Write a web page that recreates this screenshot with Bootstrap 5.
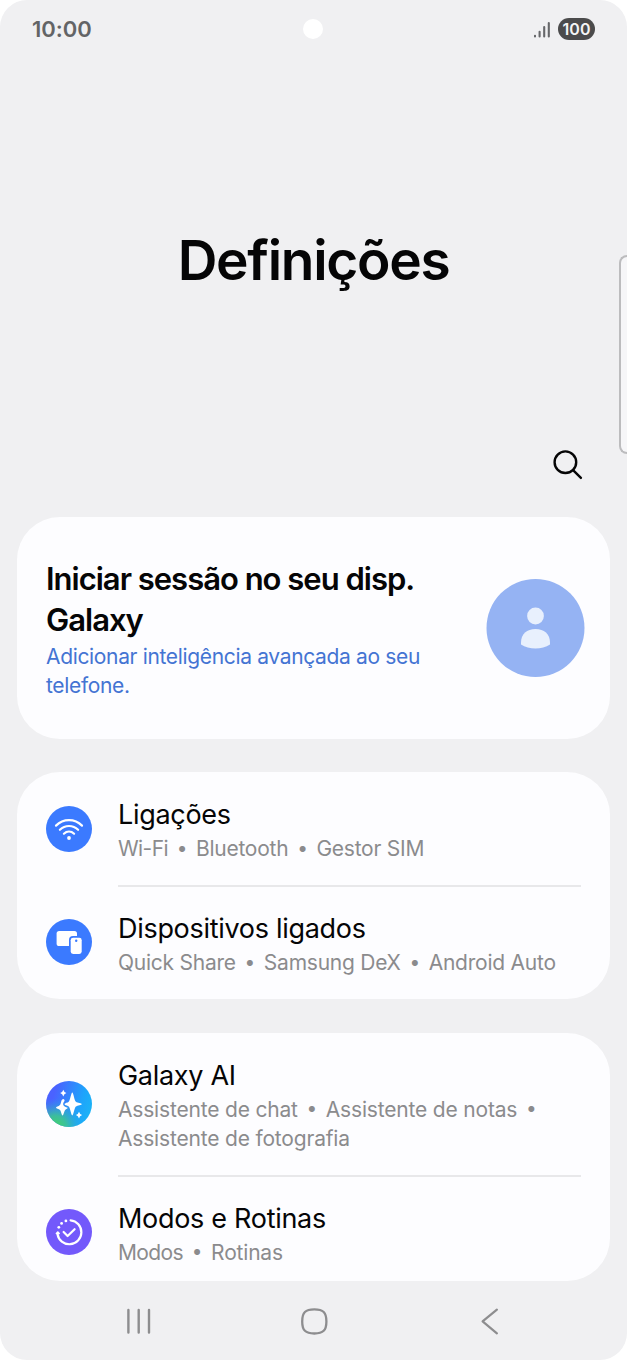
<!DOCTYPE html>
<html lang="pt">
<head>
<meta charset="utf-8">
<meta name="viewport" content="width=device-width, initial-scale=1">
<title>Definições</title>
<link rel="stylesheet" href="https://cdn.jsdelivr.net/npm/bootstrap@5.3.0/dist/css/bootstrap.min.css">
<style>
  body { background: #fff; font-family: Inter, "Liberation Sans", sans-serif; color: #050506; }
  svg { display: block; flex: none; }
  .screen { height: 1360px; background: #f0f0f2; border-radius: 27px; }
  .status-bar { height: 58px; padding: 0 32px 0 32px; color: #636466; }
  .clock { font-size: 22px; font-weight: 600; letter-spacing: -.05px; line-height: 58px; }
  .camera { width: 20px; height: 20px; top: 19px; left: 303px; background: #fff; }
  .battery { width: 37px; height: 22px; background: #4b4b4c; color: #f4f4f5; font-size: 16px; font-weight: 600; line-height: 22px; }
  .hero { height: 374px; padding-top: 162px; }
  .hero h1 { font-size: 55px; font-weight: 560; line-height: 80px; letter-spacing: -1.3px; }
  .edge-panel { top: 254.5px; right: 0; width: 8px; height: 199px; background: #f6f6f8; border: 2px solid #bcbcbe; border-right: 0; border-radius: 8px 0 0 8px; }
  .search-row { height: 85px; padding: 16px 44px 0 0; }
  .panel { margin: 0 17px; background: #fdfdff; border-radius: 43px; }
  .account { height: 222px; padding: 2px 25px 0 29px; margin-bottom: 33px; }
  .account svg { margin-bottom: 2px; }
  .account h2 { font-size: 31px; font-weight: 570; line-height: 41px; letter-spacing: -1px; margin: 0 0 2px; }
  .account p { font-size: 21px; line-height: 29px; letter-spacing: -.34px; color: #4474d3; margin: 0; }
  .entry { padding-left: 29px; padding-right: 29px; gap: 26px; }
  .entry svg { margin-bottom: 3px; }
  .entry-text { padding: 24px 0 23px; }
  .entry:first-child .entry-text { padding: 25px 0 22px; }
  .entry:not(:last-child) .entry-text { border-bottom: 2px solid #e8e8ea; }
  .entry:not(:last-child) > svg { margin-bottom: 2px; }
  .entry h3 { font-size: 27px; font-weight: 400; line-height: 35px; letter-spacing: -.3px; margin: 0 0 2px; }
  .entry p { font-size: 21px; line-height: 29px; letter-spacing: -.18px; color: #8b8b8d; margin: 0; white-space: nowrap; }
  .tight { letter-spacing: -.6px; }
  .dot { display: inline-block; width: 28px; text-align: center; font-size: 19px; line-height: 20px; position: relative; top: -1.5px; }
  .connections { height: 227px; margin-bottom: 33.5px; }
  .connections p { letter-spacing: -.24px; }
  .features { height: 248.5px; }
  .nav-keys { height: 80px; padding: 0 124px 0 124px; color: #8d8d8f; }
</style>
</head>
<body>
<main class="screen position-relative overflow-hidden">
  <header class="status-bar d-flex align-items-center justify-content-between">
    <span class="clock">10:00</span>
    <span class="camera position-absolute rounded-circle"></span>
    <div class="d-flex align-items-center gap-2">
      <svg width="17" height="18" viewBox="0 0 17 18" fill="none" stroke="#66676a" stroke-width="2.1" stroke-linecap="round"><path d="M2 15.7v.8M6.6 11.7v4.8M11.2 7v9.5M15.8 3v13.5"/></svg>
      <span class="battery rounded-pill text-center">100</span>
    </div>
  </header>

  <section class="hero text-center"><h1 class="m-0">Definições</h1></section>
  <div class="edge-panel position-absolute"></div>

  <div class="search-row d-flex justify-content-end">
    <svg width="32" height="32" viewBox="0 0 32 32" fill="none" stroke="#050506" stroke-width="2.4" stroke-linecap="round"><circle cx="14.4" cy="14.2" r="10.8"/><path d="M22.3 22.3l7.6 7.6"/></svg>
  </div>

  <section class="panel account d-flex align-items-center justify-content-between">
    <div>
      <h2>Iniciar sessão no seu disp.<br>Galaxy</h2>
      <p>Adicionar inteligência avançada ao seu<br>telefone.</p>
    </div>
    <svg width="99" height="99" viewBox="0 0 99 99"><circle cx="49.5" cy="49" r="49" fill="#95b3f3"/><g fill="#e8f0fd"><circle cx="49.5" cy="37" r="8.4"/><path d="M35 63.4C35 55.2 41 50 49.5 50S64 55.2 64 63.4V65.4C56 70.8 43 70.8 35 65.4Z"/></g></svg>
  </section>

  <section class="panel connections">
    <div class="entry d-flex align-items-center">
      <svg width="46" height="46" viewBox="0 0 46 46"><circle cx="23" cy="23" r="23" fill="#3b7aff"/><g fill="none" stroke="#fff" stroke-width="2.2" stroke-linecap="round"><path d="M10 19.6C17.3 12.3 28.7 12.3 36 19.6"/><path d="M13.9 23.8C19.1 18.7 26.9 18.7 32.1 23.8"/><path d="M17.9 27.7C20.9 24.9 25.1 24.9 28.1 27.7"/></g><circle cx="23" cy="32" r="1.9" fill="#fff"/></svg>
      <div class="entry-text flex-grow-1">
        <h3>Ligações</h3>
        <p><span class="tight">Wi-Fi</span><span class="dot">•</span>Bluetooth<span class="dot">•</span>Gestor SIM</p>
      </div>
    </div>
    <div class="entry d-flex align-items-center">
      <svg width="46" height="46" viewBox="0 0 46 46"><circle cx="23" cy="23" r="23" fill="#3b7aff"/><rect x="10.6" y="12" width="20.4" height="15" rx="2.6" fill="#fff"/><rect x="23" y="17.1" width="14" height="19.4" rx="4" fill="#3b7aff"/><rect x="24.7" y="18.8" width="11" height="16.2" rx="2.4" fill="#fff"/><circle cx="30.2" cy="21.8" r="1.2" fill="#3b7aff"/></svg>
      <div class="entry-text flex-grow-1">
        <h3>Dispositivos ligados</h3>
        <p>Quick Share<span class="dot">•</span>Samsung DeX<span class="dot">•</span>Android Auto</p>
      </div>
    </div>
  </section>

  <section class="panel features">
    <div class="entry d-flex align-items-center">
      <svg width="46" height="46" viewBox="0 0 46 46">
        <defs>
          <linearGradient id="aiBlue" x1="0" y1=".3" x2="1" y2=".6"><stop offset=".15" stop-color="#4a62ff"/><stop offset=".75" stop-color="#1ea4fb"/><stop offset="1" stop-color="#1bb3f6"/></linearGradient>
          <radialGradient id="aiGreen" cx=".2" cy="1" r=".62"><stop offset="0" stop-color="#45d65f"/><stop offset=".4" stop-color="#3cc98d" stop-opacity=".85"/><stop offset="1" stop-color="#22a8ee" stop-opacity="0"/></radialGradient>
        </defs>
        <circle cx="23" cy="23" r="23" fill="url(#aiBlue)"/><circle cx="23" cy="23" r="23" fill="url(#aiGreen)"/>
        <g fill="#fff">
          <path d="M26.3 11.5C27.4 11.5 28.3 19.4 29.9 20.8S35.8 22.2 35.8 23.2 31.5 24 29.9 25.6 27.4 34.5 26.3 34.5 24.3 27 22.7 25.6 18.6 24.3 18.6 23.2 21.2 22.3 22.7 20.8 25.2 11.5 26.3 11.5Z"/>
          <path d="M16.6 18.2C14.9 19 15.2 22.6 13.9 24S10 25.8 10 26.7 12.9 27.8 14 29 15.7 34.4 16.6 34.4 18.2 30.1 19.2 29 21.8 27.5 21.8 26.7C19.7 26.3 17.2 25.2 17.1 23.2 17.1 21.4 18.6 20.4 18.6 19.2Q17.8 17.7 16.6 18.2Z"/>
          <path d="M17.3 8.8Q18 11.5 20.4 12 18 12.7 17.3 15.4 16.6 12.7 14.2 12 16.6 11.5 17.3 8.8Z"/>
          <path d="M33 30.8Q33.7 33.5 36.1 34.1 33.7 34.8 33 37.4 32.3 34.8 29.9 34.1 32.3 33.5 33 30.8Z"/>
        </g>
      </svg>
      <div class="entry-text flex-grow-1">
        <h3>Galaxy AI</h3>
        <p>Assistente de chat<span class="dot">•</span>Assistente de notas<span class="dot">•</span><br>Assistente de fotografia</p>
      </div>
    </div>
    <div class="entry d-flex align-items-center">
      <svg width="46" height="46" viewBox="0 0 46 46"><circle cx="23" cy="23" r="23" fill="#7359fb"/><g fill="none" stroke="#fff" stroke-width="2.2" stroke-linecap="round" stroke-linejoin="round"><path d="M24.6 11.3A12 12 0 1 1 11.5 25"/><path d="M17.6 23l4 4 7-6.8"/><path d="M10.4 24.5l1.4-1.5 1.4 1.5z" stroke-width="1.6"/></g><g fill="#fff"><circle cx="19.9" cy="11.9" r="1.4"/><circle cx="15.6" cy="14.4" r="1.4"/><circle cx="12.8" cy="18.3" r="1.4"/></g></svg>
      <div class="entry-text flex-grow-1">
        <h3>Modos e Rotinas</h3>
        <p><span class="tight">Modos</span><span class="dot">•</span>Rotinas</p>
      </div>
    </div>
  </section>

  <nav class="nav-keys d-flex align-items-center justify-content-between">
    <svg width="30" height="32" viewBox="0 0 30 32" fill="none" stroke="currentColor" stroke-width="2.4" stroke-linecap="round"><path d="M4.4 5v22.6M14.7 5v22.6M25 5v22.6"/></svg>
    <svg width="30" height="32" viewBox="0 0 30 32" fill="none" stroke="currentColor" stroke-width="2.3"><path d="M15.3 4.3C24.2 4.3 27.4 7.5 27.4 16.4S24.2 28.5 15.3 28.5 3.2 25.3 3.2 16.4 6.4 4.3 15.3 4.3Z"/></svg>
    <svg width="30" height="32" viewBox="0 0 30 32" fill="none" stroke="currentColor" stroke-width="2.2" stroke-linecap="round" stroke-linejoin="round"><path d="M23.9 4.6L9.6 16.4l14.3 12"/></svg>
  </nav>
</main>
<script src="https://cdn.jsdelivr.net/npm/bootstrap@5.3.0/dist/js/bootstrap.bundle.min.js"></script>
</body>
</html>
